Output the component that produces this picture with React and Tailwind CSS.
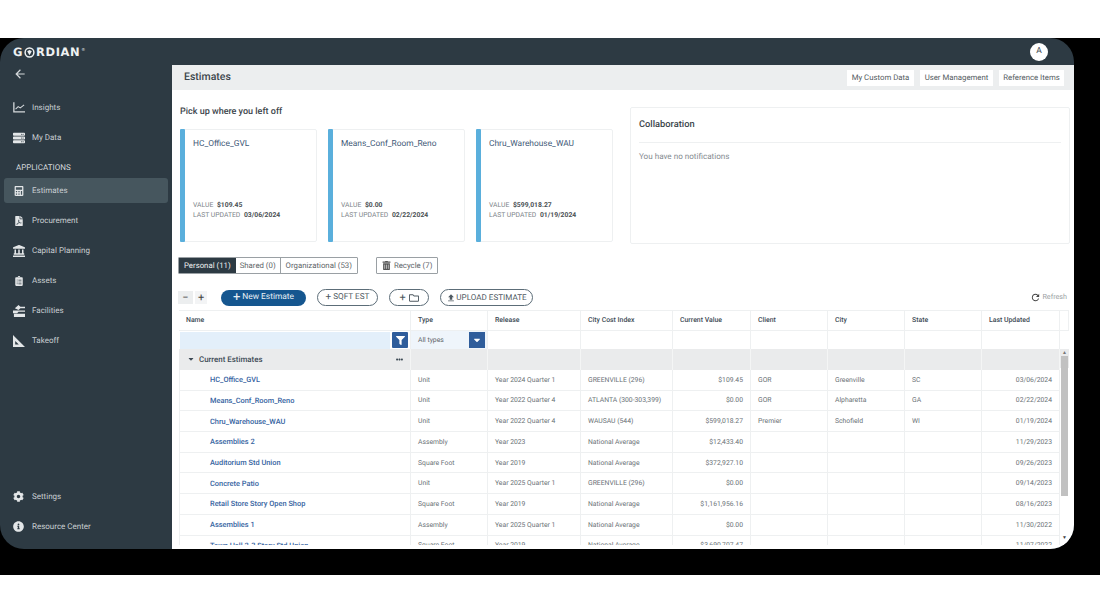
import React from "react";
import { FaCalculator, FaFilePdf, FaLandmark, FaClipboardList, FaCog, FaInfoCircle, FaServer, FaFilter, FaTrashAlt, FaCaretDown, FaEllipsisH, FaRegFolder } from "react-icons/fa";
import { MdRefresh, MdArrowBack, MdFileUpload } from "react-icons/md";

const Insights = () => (
  <svg width="12" height="11" viewBox="0 0 14 12" fill="none" stroke="#d5d9dc" strokeWidth="1.5">
    <path d="M1 0v11h13" />
    <path d="M3 8l3-3 2.5 1.5L13 3" strokeWidth="1.2" />
  </svg>
);
const Facilities = () => (
  <svg width="12" height="12" viewBox="0 0 13 13" fill="#e3e6e8">
    <path d="M6 0l2 2H13v1.4H8L6 5.4 2 3.4zM0 6h13v1.4H6L4.5 9H0zM1 9.5h12V13H1z" />
  </svg>
);
const Takeoff = () => (
  <svg width="12" height="12" viewBox="0 0 12 12" fill="#e3e6e8">
    <path fillRule="evenodd" d="M0 0l12 12H0zM2.2 6v3.6h3.6z" />
  </svg>
);

function NavItem({ icon, label, active }) {
  return (
    <div className={`mx-[4px] flex h-[25px] items-center rounded-[3px] pl-[7px] ${active ? "bg-[#46565e]" : ""}`}>
      <span className="flex w-[15px] justify-center text-[13px] text-[#e3e6e8]">{icon}</span>
      <span className="ml-[6px] text-[8px] text-[#c9ced2]">{label}</span>
    </div>
  );
}

const cols = "grid-cols-[232px_77px_93px_92px_78px_77px_77px_77px_78px]";

const rows = [
  ["HC_Office_GVL", "Unit", "Year 2024 Quarter 1", "GREENVILLE (296)", "$109.45", "GOR", "Greenville", "SC", "03/06/2024"],
  ["Means_Conf_Room_Reno", "Unit", "Year 2022 Quarter 4", "ATLANTA (300-303,399)", "$0.00", "GOR", "Alpharetta", "GA", "02/22/2024"],
  ["Chru_Warehouse_WAU", "Unit", "Year 2022 Quarter 4", "WAUSAU (544)", "$599,018.27", "Premier", "Schofield", "WI", "01/19/2024"],
  ["Assemblies 2", "Assembly", "Year 2023", "National Average", "$12,433.40", "", "", "", "11/29/2023"],
  ["Auditorium Std Union", "Square Foot", "Year 2019", "National Average", "$372,927.10", "", "", "", "09/26/2023"],
  ["Concrete Patio", "Unit", "Year 2025 Quarter 1", "GREENVILLE (296)", "$0.00", "", "", "", "09/14/2023"],
  ["Retail Store Story Open Shop", "Square Foot", "Year 2019", "National Average", "$1,161,956.16", "", "", "", "08/16/2023"],
  ["Assemblies 1", "Assembly", "Year 2025 Quarter 1", "National Average", "$0.00", "", "", "", "11/30/2022"],
  ["Town Hall 2-3 Story Std Union", "Square Foot", "Year 2019", "National Average", "$3,690,707.47", "", "", "", "11/07/2022"],
];

function Card({ title, value, updated }) {
  return (
    <div className="flex h-[113px] w-[137px] rounded-[2px] border border-[#eef0f1] bg-white">
      <div className="-my-px -ml-px w-[5px] rounded-[1px] bg-[#5aafdc]" />
      <div className="flex flex-1 flex-col pl-[8px]">
        <div className="pt-[8px] text-[8.4px] leading-[12px] text-[#3f5a78]">{title}</div>
        <div className="mt-auto pb-[21px] text-[6.8px] leading-[9.5px] text-[#7c8388]">
          <div>VALUE <b className="ml-[2px] text-[#4a4f53]">{value}</b></div>
          <div>LAST UPDATED <b className="ml-[2px] text-[#4a4f53]">{updated}</b></div>
        </div>
      </div>
    </div>
  );
}

export default function App() {
  return (
    <div className="h-[614px] w-[1100px] overflow-hidden bg-white pt-[38px] font-['Roboto',sans-serif] [text-rendering:geometricPrecision]">
      <div className="h-[537px] bg-black">
        <div className="flex h-[511px] w-[1074px] flex-col overflow-hidden rounded-[24px] bg-[#2d3a43]">
          <div className="flex h-[27px] shrink-0 items-center justify-between pl-[13px] pr-[26px]">
            <div className="flex items-center pt-[2px] font-['DejaVu_Sans',sans-serif] text-[11.5px] font-bold tracking-[0.6px] text-[#eef1f2]">
              <span>G</span>
              <svg width="11" height="11" viewBox="0 0 12 12" className="mx-[1px]">
                <circle cx="6" cy="6" r="4.8" fill="none" stroke="#eef1f2" strokeWidth="1.6" />
                <path d="M3.5 4.5L6 3.2l2.5 1.3L6 9z" fill="#eef1f2" />
              </svg>
              <span>RDIAN</span>
              <span className="mb-[5px] ml-[1px] text-[4px] font-normal">®</span>
            </div>
            <div className="flex h-[18px] w-[18px] items-center justify-center rounded-full bg-white text-[8.5px] text-[#3a444b]">A</div>
          </div>
          <div className="flex min-h-0 flex-1">
            <aside className="flex w-[172px] shrink-0 flex-col">
              <div className="pl-[13px] pt-[2px] text-[14px] text-[#d5d9dc]"><MdArrowBack /></div>
              <div className="mt-[14px] flex flex-col gap-[5px]">
                <NavItem icon={<Insights />} label="Insights" />
                <NavItem icon={<FaServer className="text-[12px]" />} label="My Data" />
              </div>
              <div className="ml-[16px] mt-[12px] text-[8px] leading-[11px] text-[#d5d9dc]">APPLICATIONS</div>
              <div className="mt-[5px] flex flex-col gap-[5px]">
                <NavItem icon={<FaCalculator className="text-[10px]" />} label="Estimates" active />
                <NavItem icon={<FaFilePdf className="text-[10px]" />} label="Procurement" />
                <NavItem icon={<FaLandmark className="text-[12px]" />} label="Capital Planning" />
                <NavItem icon={<FaClipboardList className="text-[10px]" />} label="Assets" />
                <NavItem icon={<Facilities />} label="Facilities" />
                <NavItem icon={<Takeoff />} label="Takeoff" />
              </div>
              <div className="mt-auto flex flex-col gap-[5px] pb-[10px]">
                <NavItem icon={<FaCog className="text-[11px]" />} label="Settings" />
                <NavItem icon={<FaInfoCircle className="text-[11px]" />} label="Resource Center" />
              </div>
            </aside>
            <main className="flex min-w-0 flex-1 flex-col bg-white pb-[4px]">
              <div className="flex h-[25px] shrink-0 items-center justify-between bg-[#eceeef] pl-[12px] pr-[10px]">
                <div className="pb-[2px] text-[10.5px] font-medium text-[#3d464c]">Estimates</div>
                <div className="flex gap-[6px] pt-[1px]">
                  {[["My Custom Data", "w-[67px]"], ["User Management", "w-[73px]"], ["Reference Items", "w-[65px]"]].map(([t, w]) => (
                    <div key={t} className={`flex h-[16px] items-center justify-center bg-white text-[7.8px] text-[#555c61] ${w}`}>{t}</div>
                  ))}
                </div>
              </div>
              <div className="flex h-[167px] shrink-0 pl-[8px] pr-[4px]">
                <div className="w-[450px]">
                  <div className="pt-[16px] text-[9px] font-medium leading-[12px] text-[#3d464c]">Pick up where you left off</div>
                  <div className="mt-[11px] flex gap-[11px]">
                    <Card title="HC_Office_GVL" value="$109.45" updated="03/06/2024" />
                    <Card title="Means_Conf_Room_Reno" value="$0.00" updated="02/22/2024" />
                    <Card title="Chru_Warehouse_WAU" value="$599,018.27" updated="01/19/2024" />
                  </div>
                </div>
                <div className="mt-[17px] h-[137px] flex-1 rounded-[2px] border border-[#eef0f1] px-[8px]">
                  <div className="border-b border-[#eef0f1] pb-[11px] pt-[11px] text-[9.3px] font-medium leading-[12px] text-[#3d464c]">Collaboration</div>
                  <div className="pt-[8px] text-[8.1px] leading-[11px] text-[#858b90]">You have no notifications</div>
                </div>
              </div>
              <div className="flex shrink-0 items-center pl-[6px]">
                <div className="flex h-[17px] items-stretch rounded-[1px] border border-[#9aa0a4] text-[7.8px] text-[#5d6468]">
                  <div className="flex items-center bg-[#2d3a43] px-[5px] text-[#eef1f2]">Personal (11)</div>
                  <div className="flex items-center px-[4px]">Shared (0)</div>
                  <div className="flex items-center border-l border-[#9aa0a4] px-[5px]">Organizational (53)</div>
                </div>
                <div className="ml-[18px] flex h-[17px] items-center rounded-[1px] border border-[#9aa0a4] px-[5px] text-[7.8px] text-[#5d6468]">
                  <FaTrashAlt className="mr-[3px] text-[9px] text-[#555]" />Recycle (7)
                </div>
              </div>
              <div className="mt-[15px] flex h-[17px] shrink-0 items-center pl-[6px] pr-[7px]">
                <div className="flex gap-[2px]">
                  <div className="flex h-[13px] w-[15px] items-center justify-center bg-[#eceeef] text-[11px] leading-none text-[#444]">−</div>
                  <div className="flex h-[13px] w-[12px] items-center justify-center bg-[#f3f4f5] text-[11px] leading-none text-[#444]">+</div>
                </div>
                <div className="ml-[14px] flex h-[16px] w-[85px] items-center justify-center rounded-full bg-[#15568f] text-[8.4px] text-[#e8eff5]">
                  <span className="mr-[2px] text-[13px] leading-none">+</span>New Estimate
                </div>
                <div className="ml-[11px] flex h-[17px] w-[61px] items-center justify-center rounded-full border border-[#5c6d78] text-[8.2px] text-[#4f5a62]">
                  <span className="mr-[2px] text-[10px] leading-none">+</span>SQFT EST
                </div>
                <div className="ml-[11px] flex h-[17px] w-[40px] items-center justify-center rounded-full border border-[#5c6d78] text-[#4f5a62]">
                  <span className="mr-[3px] text-[11px] leading-none">+</span><FaRegFolder className="text-[10px]" />
                </div>
                <div className="ml-[11px] flex h-[17px] w-[93px] items-center justify-center rounded-full border border-[#5c6d78] text-[8.1px] text-[#4f5a62]">
                  <MdFileUpload className="text-[10px]" />UPLOAD ESTIMATE
                </div>
                <div className="ml-auto flex items-center text-[7.2px] text-[#9a9fa3]">
                  <MdRefresh className="mr-[1px] text-[11px] text-[#444]" />Refresh
                </div>
              </div>
              <div className="relative ml-[7px] mt-[4px] min-h-0 w-[890px] flex-1 overflow-hidden">
                <div className="h-[21px] w-[890px] border-y border-r border-[#eef0f1]">
                  <div className={`grid h-full w-[881px] ${cols} text-[6.9px] font-medium text-[#3d4a55]`}>
                    {["Name", "Type", "Release", "City Cost Index", "Current Value", "Client", "City", "State", "Last Updated"].map((h) => (
                      <div key={h} className="flex items-center border-r border-[#eef0f1] pl-[7px]">{h}</div>
                    ))}
                  </div>
                </div>
                <div className={`grid h-[18px] w-[881px] ${cols} text-[6.8px] text-[#5d6468]`}>
                  <div className="flex items-center justify-between border-r border-[#eef0f1] pl-[1px] pr-[2px]">
                    <div className="h-[17px] w-[210px] bg-[#e3effa]" />
                    <div className="flex h-[16px] w-[16px] items-center justify-center rounded-[1px] bg-[#2f5d9b] text-[9px] text-white"><FaFilter /></div>
                  </div>
                  <div className="flex items-center justify-between border-r border-[#eef0f1] bg-[#eff5fb] pl-[7px] pr-[2px]">
                    <span>All types</span>
                    <div className="flex h-[16px] w-[16px] items-center justify-center bg-[#2f5d9b] text-[10px] text-white"><FaCaretDown /></div>
                  </div>
                  {[0, 1, 2, 3, 4, 5, 6].map((i) => <div key={i} className="border-r border-[#eef0f1]" />)}
                </div>
                <div className={`grid h-[21px] w-[881px] ${cols} bg-[#eaebec] text-[7.9px] font-medium text-[#3d4a55]`}>
                  <div className="flex items-center justify-between border-r border-[#f4f5f5] pl-[8px] pr-[7px]">
                    <span className="flex items-center"><span className="mr-[4px] text-[8px]"><FaCaretDown /></span>Current Estimates</span>
                    <FaEllipsisH className="text-[7px]" />
                  </div>
                  {[0, 1, 2, 3, 4, 5, 6, 7].map((i) => <div key={i} className="border-r border-[#f4f5f5]" />)}
                </div>
                {rows.map((r) => (
                  <div key={r[0]} className={`grid h-[20.7px] w-[881px] ${cols} border-b border-[#eef0f1] text-[6.8px] text-[#6a7176]`}>
                    {r.map((c, i) => (
                      <div
                        key={i}
                        className={`flex items-center border-r border-[#eef0f1] ${i === 0 ? "border-l pl-[30px] text-[7.4px] font-medium text-[#35639f]" : i === 4 || i === 8 ? "justify-end pr-[7px]" : "pl-[7px]"}`}
                      >
                        {c}
                      </div>
                    ))}
                  </div>
                ))}
                <div className="absolute bottom-0 left-[881px] top-[39px] flex w-[9px] flex-col items-center bg-white">
                  <div className="h-[21px] w-full bg-[#eaebec]" />
                  <div className="relative h-full w-full">
                    <div className="absolute left-0 top-[-18px] w-full text-center text-[5px] leading-[6px] text-[#777]">▲</div>
                    <div className="absolute left-[1px] top-[-12px] h-[140px] w-[7px] bg-[#c1c1c1]" />
                    <div className="absolute bottom-[4px] left-0 w-full text-center text-[5px] leading-[6px] text-[#444]">▼</div>
                  </div>
                </div>
              </div>
            </main>
          </div>
        </div>
      </div>
    </div>
  );
}
